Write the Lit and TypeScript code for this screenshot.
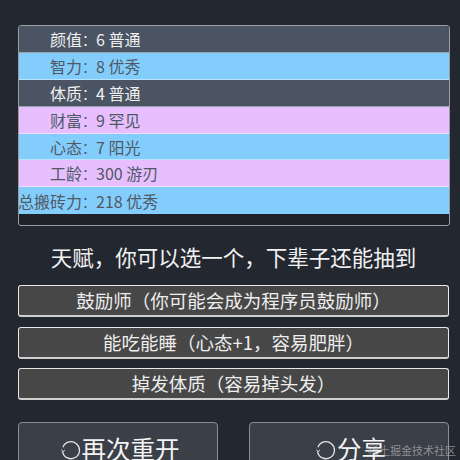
import { LitElement, html, css } from "lit";
import { customElement } from "lit/decorators.js";

const rows = [
  ["颜值", "6 普通", "n"],
  ["智力", "8 优秀", "b"],
  ["体质", "4 普通", "n"],
  ["财富", "9 罕见", "p"],
  ["心态", "7 阳光", "b"],
  ["工龄", "300 游刃", "p"],
  ["总搬砖力", "218 优秀", "b"],
];
const talents = ["鼓励师（你可能会成为程序员鼓励师）", "能吃能睡（心态+1，容易肥胖）", "掉发体质（容易掉头发）"];

const spin = html`<svg class="spin" viewBox="0 0 20 20" fill="none" stroke="currentColor" stroke-width="1.3"><path d="M2 7.2A8.5 8.5 0 1 1 1.6 11.8"/><path d="M0.4 9.6 2 11.8 3.9 10" stroke-width="1"/></svg>`;

@customElement("app-root")
export class AppRoot extends LitElement {
  static styles = css`
    :host { display: block; width: 460px; height: 460px; overflow: hidden; background: #23272f; font-family: "Noto Sans CJK SC", "Liberation Sans", sans-serif; color: #eeeeee; }
    .page { display: flex; flex-direction: column; padding: 25px 10px 0 18px; box-sizing: border-box; height: 460px; position: relative; }
    .panel { height: 201px; box-sizing: border-box; border: 1px solid #9a9da3; border-radius: 3px; background: #1f2329; overflow: hidden; flex: none; }
    .row { display: flex; height: 26.9px; align-items: center; font-size: 16px; line-height: 26px; box-sizing: border-box; border-bottom: 1px solid rgba(255, 255, 255, 0.45); }
    .k { width: 77px; text-align: right; white-space: nowrap; flex: none; display: flex; justify-content: flex-end; }
    .colon { display: inline-block; width: 14px; font-size: 14px; text-align: left; }
    .n { background: #4a5462; color: #f0f0f0; }
    .b { background: #83cdfc; color: #4f5965; }
    .p { background: #e7bfff; color: #4f5965; }
    .row.last { border-bottom: none; }
    h2 { margin: 15px 0 0; font-weight: 400; font-size: 21.5px; line-height: 32px; text-align: center; color: #f2f2f2; width: 431px; }
    .talents { display: flex; flex-direction: column; gap: 9.5px; margin-top: 12px; }
    .talent { height: 32px; box-sizing: border-box; border: 1px solid #e8e8e8; border-bottom: 2px solid #d0d0d0; border-radius: 3px; background: #474747; color: #eeeeee; font-size: 18.5px; line-height: 29px; text-align: center; width: 431px; }
    .actions { display: flex; justify-content: space-between; margin-top: 22px; width: 431px; }
    .btn { width: 200px; height: 60px; box-sizing: border-box; border: 1px solid #8b8e94; border-radius: 4px; background: #3b3f47; color: #f4f4f4; font-size: 24.5px; display: flex; justify-content: center; align-items: flex-start; line-height: 52px; padding-left: 4px; }
    .spin { width: 20px; height: 20px; margin: 17px 1px 0 0; color: #e6e6e6; flex: none; }
    .mark { position: absolute; right: 4px; bottom: 2px; font-size: 11px; line-height: 16px; color: rgba(200, 200, 200, 0.6); }
  `;
  render() {
    return html`<div class="page">
      <div class="panel">
        ${rows.map(([k, v, c], i) => html`<div class="row ${c} ${i === 6 ? "last" : ""}"><span class="k"><span>${k}</span><span class="colon">：</span></span><span class="v">${v}</span></div>`)}
      </div>
      <h2>天赋，你可以选一个，下辈子还能抽到</h2>
      <div class="talents">${talents.map((t) => html`<div class="talent">${t}</div>`)}</div>
      <div class="actions">
        <div class="btn">${spin}<span>再次重开</span></div>
        <div class="btn">${spin}<span>分享</span></div>
      </div>
      <div class="mark">稀土掘金技术社区</div>
    </div>`;
  }
}
